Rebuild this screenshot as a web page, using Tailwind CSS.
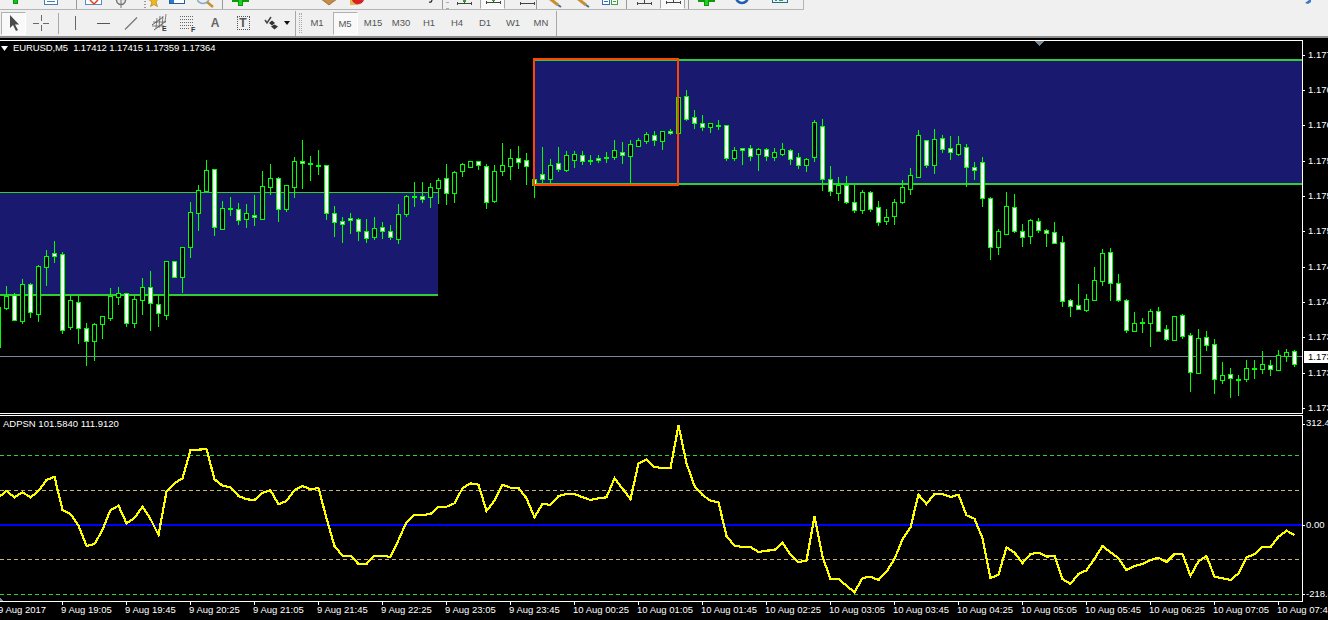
<!DOCTYPE html>
<html lang="en">
<head>
  <meta charset="UTF-8">
  <title>EURUSD,M5</title>
  <script src="https://cdn.jsdelivr.net/npm/@tailwindcss/browser@4"></script>
</head>
<body class="bg-black font-['Liberation_Sans',sans-serif] overflow-hidden">
<div class="w-[1328px] h-[620px] flex flex-col overflow-hidden">

  <!-- Top toolbar, cut off by the window -->
  <div class="h-[10px] bg-[#f0f0f0] flex shrink-0 overflow-hidden">
    <div class="w-[804px] h-[10px] border-b border-r border-[#b4b4b4] flex items-end overflow-hidden">
      <svg class="ml-[7px] shrink-0" width="16" height="16" shape-rendering="crispEdges"><rect x="6" y="6" width="5" height="5" fill="#009a00"/><rect x="7" y="6" width="3" height="4" fill="#16c016"/></svg>
      <svg class="ml-[20px] shrink-0" width="16" height="16" shape-rendering="crispEdges"><rect x="1.500" y="4.500" width="13" height="7" fill="#fff" stroke="#4a7db5"/><path d="M4 8.500h8" stroke="#4a7db5"/></svg>
      <div class="ml-[17px] w-px h-[9px] bg-[#9a9a9a] shrink-0"></div>
      <svg class="ml-[8px] shrink-0" width="18" height="16"><rect x="0.500" y="3.500" width="16" height="8" fill="#fff" stroke="#5a8ac0"/><path d="M5 7l4 4 4-4" fill="none" stroke="#e04020" stroke-width="1.500"/></svg>
      <svg class="ml-[11px] shrink-0" width="14" height="16"><circle cx="7" cy="7" r="4.500" fill="#e8e8e8" stroke="#777" stroke-width="1.500"/><path d="M7 7v8" stroke="#777"/></svg>
      <svg class="ml-[16px] shrink-0" width="14" height="16"><path d="M4 6h10l-2 3 1.500 4.500-3.500-2-3.500 2L8 9z" fill="#f0b820" stroke="#b08010" stroke-width="0.700"/><path d="M1 8v1M1 11v1M1 14v1" stroke="#444"/></svg>
      <svg class="ml-[11px] shrink-0" width="16" height="16" shape-rendering="crispEdges"><rect x="0.500" y="2.500" width="15" height="8" fill="#fff" stroke="#1f5fa8"/><rect x="1" y="3" width="4" height="7" fill="#2f78c8"/></svg>
      <svg class="ml-[12px] shrink-0" width="18" height="16"><circle cx="6" cy="4" r="6.500" fill="#e0f0fa" stroke="#90a8b8" stroke-width="1.500"/><path d="M10 9l6 5" stroke="#c89030" stroke-width="2.500"/></svg>
      <div class="ml-[7px] w-px h-[9px] bg-[#9a9a9a] shrink-0"></div>
      <svg class="ml-[9px] shrink-0" width="18" height="16" shape-rendering="crispEdges"><rect x="0" y="6" width="17" height="3" fill="#0a9a0a"/><rect x="6" y="6" width="5" height="7" fill="#0a9a0a"/><rect x="7" y="6" width="3" height="6" fill="#20d020"/></svg>
      <svg class="ml-[70px] shrink-0" width="18" height="16"><path d="M1 6h16l-8 6z" fill="#c48c44" stroke="#8a5c20" stroke-width="0.700"/></svg>
      <svg class="ml-[11px] shrink-0" width="16" height="16"><path d="M1 6h8v6H1z" fill="#e8b850"/><circle cx="9" cy="5" r="6" fill="#e02020" stroke="#a01010" stroke-width="0.500"/><rect x="6" y="5" width="6" height="2" fill="#fff"/></svg>
      <svg class="ml-[64px] shrink-0" width="5" height="16"><path d="M0 9q3 1 3-3" fill="none" stroke="#223" stroke-width="1.200"/></svg>
      <div class="ml-[8px] w-px h-[9px] bg-[#9a9a9a] shrink-0"></div>
      <div class="ml-[3px] w-[3px] h-[7px] border-y border-[#aaa] shrink-0"></div>
      <svg class="ml-[7px] shrink-0" width="16" height="16" shape-rendering="crispEdges"><path d="M1 10.500h14M8 5v5" stroke="#444"/><path d="M1 9v3M15 9v3" stroke="#444"/><rect x="7" y="6" width="3" height="3" fill="#30a030"/></svg>
      <div class="ml-[8px] w-[25px] h-[9px] flex justify-center items-end bg-[#f9f9f9] border-x border-b border-x-[#a8a8a8] border-b-white shrink-0">
        <svg class="shrink-0" width="16" height="16" shape-rendering="crispEdges"><path d="M1 10.500h14M8 5v5" stroke="#444"/><path d="M1 9v3M15 9v3" stroke="#444"/><rect x="7" y="6" width="3" height="3" fill="#30a030"/></svg>
      </div>
      <svg class="ml-[14px] shrink-0" width="16" height="16" shape-rendering="crispEdges"><path d="M1 10.500h14" stroke="#444"/><path d="M1 9v3M15 9v3" stroke="#444"/></svg>
      <div class="ml-px w-px h-[9px] bg-[#9a9a9a] shrink-0"></div>
      <svg class="ml-[10px] shrink-0" width="16" height="16"><path d="M2 5l9 7" stroke="#c89030" stroke-width="3"/><path d="M11 12l3 2" stroke="#4070a0" stroke-width="2"/></svg>
      <svg class="ml-[12px] shrink-0" width="16" height="16"><path d="M2 5l9 7" stroke="#c89030" stroke-width="3"/><path d="M11 12l3 2" stroke="#4070a0" stroke-width="2"/></svg>
      <svg class="ml-[10px] shrink-0" width="18" height="16" shape-rendering="crispEdges"><rect x="1.500" y="5.500" width="7" height="6" fill="#fff" stroke="#2f6fc0"/><rect x="10.500" y="5.500" width="6" height="6" fill="#fff" stroke="#40a040"/><path d="M3 8.500h4" stroke="#2f6fc0"/><path d="M12 8.500h3" stroke="#40a040"/></svg>
      <div class="ml-[7px] w-px h-[9px] bg-[#9a9a9a] shrink-0"></div>
      <svg class="ml-[9px] shrink-0" width="16" height="16" shape-rendering="crispEdges"><path d="M1 10.500h14M8 5v5" stroke="#444"/><path d="M1 9v3M15 9v3" stroke="#444"/></svg>
      <div class="ml-[8px] w-[25px] h-[9px] flex justify-center items-end bg-[#f9f9f9] border-x border-b border-x-[#a8a8a8] border-b-white shrink-0">
        <svg class="shrink-0" width="16" height="16" shape-rendering="crispEdges"><path d="M1 10.500h14M8 5v5" stroke="#444"/><path d="M1 9v3M15 9v3" stroke="#444"/></svg>
      </div>
      <div class="ml-[3px] w-px h-[9px] bg-[#9a9a9a] shrink-0"></div>
      <svg class="ml-[9px] shrink-0" width="18" height="16" shape-rendering="crispEdges"><rect x="0" y="6" width="17" height="3" fill="#0a9a0a"/><rect x="6" y="6" width="5" height="7" fill="#0a9a0a"/><rect x="7" y="6" width="3" height="6" fill="#20d020"/></svg>
      <svg class="ml-[19px] shrink-0" width="16" height="16"><circle cx="7" cy="4" r="6" fill="#fff" stroke="#1e5fb0" stroke-width="2.500"/></svg>
      <svg class="ml-[21px] shrink-0" width="16" height="16" shape-rendering="crispEdges"><rect x="0.500" y="2.500" width="15" height="7" fill="#e8f4f4" stroke="#2a6a8a"/><path d="M3 8l3-2 3 2 3-2" fill="none" stroke="#30a060"/></svg>
    </div>
    <svg class="ml-[501px] shrink-0" width="6" height="4"><path d="M0 3l4-3h2v2l-3 2z" fill="#3f78c8"/></svg>
  </div>

  <!-- Line studies and periodicity toolbar -->
  <div class="h-[26px] bg-[#f0f0f0] flex items-center shrink-0 pl-px text-[#555] text-[9.5px]">
    <div class="w-[25px] h-[23px] flex items-center justify-center bg-[#f9f9f9] border border-t-[#b0b0b0] border-l-[#b0b0b0] border-b-white border-r-white shrink-0">
      <svg width="10" height="16"><path d="M1 0v13l3-3 3 6 2-1-3-5.500h4z" fill="#4a4a4a"/></svg>
    </div>
    <div class="ml-px w-7 flex justify-center shrink-0">
      <svg width="16" height="16" shape-rendering="crispEdges"><path d="M8 0v6M8 10v6M0 8h6M10 8h6" stroke="#6a6a6a" fill="none"/></svg>
    </div>
    <div class="ml-[3px] w-px h-[21px] bg-[#a8a8a8] shrink-0"></div>
    <div class="ml-[2px] w-7 flex justify-center shrink-0">
      <svg width="3" height="14" shape-rendering="crispEdges"><path d="M1.500 0v14" stroke="#666"/></svg>
    </div>
    <div class="w-7 flex justify-center shrink-0">
      <svg width="13" height="3" shape-rendering="crispEdges"><path d="M0 1.500h13" stroke="#555"/></svg>
    </div>
    <div class="w-7 flex justify-center shrink-0">
      <svg width="14" height="13"><path d="M1 12.500L13 0.500" stroke="#777" stroke-width="1.200"/></svg>
    </div>
    <div class="w-7 flex justify-center shrink-0 relative">
      <svg width="17" height="18"><path d="M1 11L12 3M3 16L15 7" stroke="#555"/><path d="M6 4l-1 10M9 2l-1 12M12 2l-1 10M15 0l-1 8M2 8h13M1 12h12" stroke="#666" stroke-width="0.800"/></svg>
      <span class="absolute left-[17px] top-[11px] text-[7px] leading-[7px] font-bold text-[#333]">E</span>
    </div>
    <div class="w-7 flex justify-center shrink-0 relative">
      <svg width="14" height="14" shape-rendering="crispEdges"><path d="M0 0.500h14M0 3.500h14M0 6.500h14M0 9.500h14M0 12.500h10" stroke="#666" stroke-dasharray="1 1"/></svg>
      <span class="absolute left-[18px] top-[10px] text-[7px] leading-[7px] font-bold text-[#333]">F</span>
    </div>
    <div class="w-7 text-center text-[12px] leading-[14px] font-bold text-[#666] shrink-0">A</div>
    <div class="w-7 flex justify-center shrink-0">
      <div class="w-[13px] h-[14px] border border-dotted border-[#555] flex items-center justify-center text-[12px] leading-[12px] font-bold text-[#555]">T</div>
    </div>
    <div class="w-7 flex justify-center shrink-0">
      <svg width="15" height="14"><path d="M1 4l2 3 4-6" fill="none" stroke="#444" stroke-width="1.500"/><path d="M5 7l3-2.500 3 2.500-3 2.500z" fill="#333"/><path d="M7 10.500l3.500-2 3.500 2-3.500 3z" fill="#333"/></svg>
    </div>
    <svg class="-ml-[1px] shrink-0" width="6" height="4"><path d="M0 0h6L3 4z" fill="#111"/></svg>
    <div class="ml-[5px] w-px h-[25px] bg-[#a8a8a8] shrink-0"></div>
    <div class="ml-[3px] w-[3px] h-[20px] border-x border-dotted border-[#aaa] shrink-0"></div>
    <div class="ml-px w-7 text-center shrink-0">M1</div>
    <div class="w-7 flex justify-center shrink-0">
      <div class="w-[25px] h-[23px] leading-[21px] text-center bg-[#f9f9f9] border border-t-[#b0b0b0] border-l-[#b0b0b0] border-b-white border-r-white">M5</div>
    </div>
    <div class="w-7 text-center shrink-0">M15</div>
    <div class="w-7 text-center shrink-0">M30</div>
    <div class="w-7 text-center shrink-0">H1</div>
    <div class="w-7 text-center shrink-0">H4</div>
    <div class="w-7 text-center shrink-0">D1</div>
    <div class="w-7 text-center shrink-0">W1</div>
    <div class="w-7 text-center shrink-0">MN</div>
    <div class="ml-px w-px h-[25px] bg-[#a8a8a8] shrink-0"></div>
  </div>

  <!-- Toolbar bottom edge -->
  <div class="h-[2px] bg-[#8e8e8e] shrink-0"></div>

  <!-- Chart -->
  <div class="relative w-[1328px] h-[582px] bg-black shrink-0 overflow-hidden text-white text-[9.5px] leading-[12px] whitespace-nowrap">
    <svg id="chart" class="absolute left-0 top-0" width="1328" height="582" viewBox="0 38 1328 582" shape-rendering="crispEdges"></svg>

    <!-- Main pane header -->
    <svg class="absolute left-[1px] top-[8px]" width="7" height="5"><path d="M0 0h7L3.500 5z" fill="#fff"/></svg>
    <span class="absolute left-[13px] top-[4px] tracking-[-0.1px]">EURUSD,M5&nbsp; 1.17412 1.17415 1.17359 1.17364</span>

    <!-- Price axis -->
    <span class="absolute left-[1308px] top-[11px]">1.17740</span>
    <span class="absolute left-[1308px] top-[46px]">1.17690</span>
    <span class="absolute left-[1308px] top-[81px]">1.17655</span>
    <span class="absolute left-[1308px] top-[117px]">1.17590</span>
    <span class="absolute left-[1308px] top-[152px]">1.17555</span>
    <span class="absolute left-[1308px] top-[187px]">1.17520</span>
    <span class="absolute left-[1308px] top-[223px]">1.17485</span>
    <span class="absolute left-[1308px] top-[258px]">1.17450</span>
    <span class="absolute left-[1308px] top-[293px]">1.17380</span>
    <span class="absolute left-[1304px] top-[313px] w-[24px] h-[12px] bg-white text-black pl-[4px]">1.17364</span>
    <span class="absolute left-[1308px] top-[329px]">1.17345</span>
    <span class="absolute left-[1308px] top-[364px]">1.17310</span>

    <!-- Indicator pane -->
    <span class="absolute left-[3px] top-[380px]">ADPSN 101.5840 111.9120</span>
    <span class="absolute left-[1306px] top-[379px]">312.43</span>
    <span class="absolute left-[1306px] top-[481px]">0.00</span>
    <span class="absolute left-[1306px] top-[550px]">-218.41</span>

    <!-- Time axis -->
    <span class="absolute left-[-2px] top-[566px]">9 Aug 2017</span>
    <span class="absolute left-[61px] top-[566px]">9 Aug 19:05</span>
    <span class="absolute left-[125px] top-[566px]">9 Aug 19:45</span>
    <span class="absolute left-[189px] top-[566px]">9 Aug 20:25</span>
    <span class="absolute left-[253px] top-[566px]">9 Aug 21:05</span>
    <span class="absolute left-[317px] top-[566px]">9 Aug 21:45</span>
    <span class="absolute left-[381px] top-[566px]">9 Aug 22:25</span>
    <span class="absolute left-[445px] top-[566px]">9 Aug 23:05</span>
    <span class="absolute left-[509px] top-[566px]">9 Aug 23:45</span>
    <span class="absolute left-[573px] top-[566px]">10 Aug 00:25</span>
    <span class="absolute left-[637px] top-[566px]">10 Aug 01:05</span>
    <span class="absolute left-[701px] top-[566px]">10 Aug 01:45</span>
    <span class="absolute left-[765px] top-[566px]">10 Aug 02:25</span>
    <span class="absolute left-[829px] top-[566px]">10 Aug 03:05</span>
    <span class="absolute left-[893px] top-[566px]">10 Aug 03:45</span>
    <span class="absolute left-[957px] top-[566px]">10 Aug 04:25</span>
    <span class="absolute left-[1021px] top-[566px]">10 Aug 05:05</span>
    <span class="absolute left-[1085px] top-[566px]">10 Aug 05:45</span>
    <span class="absolute left-[1149px] top-[566px]">10 Aug 06:25</span>
    <span class="absolute left-[1213px] top-[566px]">10 Aug 07:05</span>
    <span class="absolute left-[1277px] top-[566px]">10 Aug 07:45</span>
  </div>
</div>

<script>
  // candles read off the chart: wick top, body top, body bottom, wick bottom, 1 = white body
  // each block has its own y origin, values are 3x
  const blocks = [
    { y0: 140, rows: [
      [500,500,620,620,0],
      [438,468,503,507,0],[460,466,539,539,1],[417,433,542,549,0],[430,433,515,531,1],[375,379,521,543,0],
      [330,349,380,435,0],[303,340,347,366,1],[336,343,569,579,1],[465,481,560,567,0],[465,487,563,609,1],
      [549,565,602,675,1],[549,553,602,660,0],[529,529,551,594,0],[444,468,533,540,0],[441,460,470,492,0],
      [460,460,548,558,1],[467,478,548,561,0],[414,442,479,522,0],[393,442,488,570,1],[465,493,518,558,1],
      [364,364,524,537,0],[364,364,410,410,1],[322,322,410,456,0],[186,217,320,351,0],[136,149,218,270,0],
      [60,91,152,152,0],[88,88,260,285,1],[183,205,266,266,0],[171,205,206,225,0],[189,208,239,252,1],
      [192,220,236,261,0],[165,226,232,255,1],[93,139,236,236,0],[72,115,140,162,0],[111,115,208,243,1],
      [136,136,206,213,0],[51,64,140,171,0],[0,64,68,144,1],[48,70,71,120,0],[30,76,77,102,0],[76,76,220,237,1]
    ]},
    { y0: 50, rows: [
      [468,490,515,558,1],[501,514,521,576,1],[489,505,509,549,1],[504,508,542,570,1],[507,544,563,576,1],
      [501,535,560,567,0],[516,532,542,564,1],[525,544,560,567,1],[462,493,566,579,0],[435,439,491,498,0],
      [396,439,442,468,1],[396,439,446,456,1],[400,412,440,471,0],[384,391,413,459,0],[342,385,428,462,1],
      [363,367,428,456,0],[340,343,362,378,0],[334,334,350,350,0],[334,334,344,357,1],[342,349,455,474,1],
      [345,364,452,456,0],[279,346,362,375,0],[297,325,347,387,0],[288,325,335,354,1],[309,331,347,402,1],
      [387,387,405,441,1],[291,373,386,396,1],[327,346,386,402,0],[291,340,356,363,1],[304,316,359,363,0],
      [304,313,329,351,0],[304,316,332,342,1],[315,331,334,342,1],[316,325,331,336,1],[305,320,323,336,1],
      [270,301,320,327,0],[276,307,314,339,1],[270,283,317,396,0],[264,271,287,287,0],[246,253,272,279,0],
      [243,256,271,285,1],[243,244,272,297,0],[237,243,248,252,1],[141,142,248,248,0],[120,139,206,210,1],
      [180,202,218,234,1],[195,220,230,240,1],[220,220,230,246,0],[210,226,229,237,1],[226,226,323,330,1],
      [291,301,323,330,0],[295,295,301,342,1],[285,295,317,330,1],[295,298,311,360,0],[295,298,317,330,1],
      [295,307,320,330,0],[279,298,311,315,0],[297,301,326,342,1],[309,322,344,354,1],[324,328,344,363,0],
      [210,217,320,333,0],[207,229,386,420,1],[348,388,422,435,1],[381,406,428,450,0],[378,406,455,459,1],
      [405,457,479,486,1],[420,427,479,489,0],[423,427,476,483,1],[453,472,515,525,1],[477,500,512,522,0],
      [447,457,497,522,0],[390,412,455,459,0],[354,376,416,432,0],[240,256,380,380,0],[271,271,344,351,1],
      [237,268,344,369,0],[255,265,296,306,1],[258,295,305,327,1],[258,283,311,315,0],[282,292,352,408,1],
      [336,352,361,387,1]
    ]},
    { y0: 170, rows: [
      [-40,-23,85,107,1],[82,85,230,267,1],[178,184,230,252,0],[66,109,191,191,0],[72,112,182,185,1],
      [162,184,200,228,1],[148,151,197,219,0],[144,154,179,185,1],[178,181,188,228,1],[156,187,218,218,1],
      [198,217,392,408,1],[387,391,407,438,1],[342,404,416,416,1],[372,388,419,423,0],[291,331,389,389,0],
      [237,250,332,345,0],[234,247,338,390,1],[312,340,389,393,1],[387,391,479,486,1],[426,460,482,482,0],
      [444,456,458,486,0],[418,424,458,528,0],[411,424,482,482,1],[465,478,506,509,1],[438,438,509,509,0],
      [433,436,497,504,1],[490,496,605,663,1],[477,505,608,608,0],[483,502,524,540,1],[507,523,628,669,1],
      [576,616,629,639,0],[595,613,625,681,1],[615,628,629,675,0],[570,595,626,633,0],[570,595,598,624,1],
      [543,583,596,609,0],[570,586,596,615,1],[540,556,599,599,0],[537,547,559,573,0],[540,544,581,588,1]
    ]}
  ];

  // ADPSN values, 3x above y=410, one per bar
  const adpsn = [262,243,262,247,262,243,210,200,300,312,347,408,402,360,300,287,340,324,290,327,375,245,220,205,120,119,117,208,227,232,258,268,270,248,241,283,273,241,228,238,234,325,408,437,437,462,462,437,437,441,390,336,315,315,312,290,
    290,280,235,220,224,303,272,224,233,233,265,322,281,285,258,252,252,262,270,265,262,205,236,267,160,149,171,174,174,46,160,228,255,272,277,378,407,411,411,426,422,420,398,435,456,452,320,440,507,507,527,547,504,500,510,
    485,447,388,352,254,282,252,252,261,254,316,326,385,504,494,412,428,459,432,428,440,437,507,522,492,481,446,408,427,445,480,468,462,450,443,456,432,432,497,454,438,500,505,510,490,442,433,410,412,380,362,375];

  const GREEN = '#00ff00', LIME = '#32cd32', BLUE = '#191970', RED = '#ff4500', SLATE = '#778899', TAN = '#c8b46e';
  let out = '';
  const rect = (x, y, w, h, fill) => { out += `<rect x="${x}" y="${y}" width="${w}" height="${h}" fill="${fill}"/>`; };

  // objects behind the bars
  rect(0, 192, 438, 103, BLUE);
  rect(0, 192, 438, 1, LIME);
  rect(0, 294, 438, 2, LIME);
  rect(534, 60, 768, 125, BLUE);
  rect(534, 59, 768, 2, LIME);
  rect(534, 183, 768, 2, LIME);

  // bid line
  rect(0, 356, 1302, 1, SLATE);

  // bars
  let i = 0;
  blocks.forEach(b => {
    b.rows.forEach(c => {
      const [wt, bt, bb, wb] = c.slice(0, 4).map(v => Math.round(b.y0 + v / 3));
      const left = 8 * i - 4;
      rect(left + 2, wt, 1, wb - wt + 1, GREEN);
      rect(left, bt, 5, bb - bt + 1, GREEN);
      if (bb - bt >= 2) rect(left + 1, bt + 1, 3, bb - bt - 1, c[4] ? '#ffffff' : '#000000');
      i++;
    });
  });

  // selected rectangle stays on top of the bars
  rect(533, 58, 146, 2, RED);
  rect(533, 184, 146, 2, RED);
  rect(533, 58, 2, 128, RED);
  rect(677, 58, 2, 128, RED);

  // frame
  rect(0, 40, 1303, 1, '#ffffff');
  rect(1302, 40, 1, 374, '#ffffff');
  rect(0, 413, 1303, 1, '#ffffff');
  rect(0, 415, 1303, 1, '#ffffff');
  rect(1302, 415, 1, 187, '#ffffff');
  rect(0, 601, 1303, 1, '#ffffff');
  [55, 90, 125, 161, 196, 231, 267, 302, 337, 373, 408, 424, 525, 594].forEach(y => rect(1303, y, 2, 1, '#ffffff'));
  for (let x = 62; x < 1300; x += 64) rect(x, 602, 1, 3, '#ffffff');
  out += `<path d="M1035 41h9l-4.500 5z" fill="${SLATE}"/>`;
  out += `<path d="M0 598l3 3H0z" fill="${SLATE}"/>`;

  // indicator levels
  [[455, LIME], [490, TAN], [559, TAN], [594, LIME]].forEach(([y, col]) => {
    out += `<path d="M0 ${y + 0.5}H1302" stroke="${col}" stroke-dasharray="4 3"/>`;
  });
  rect(0, 524, 1302, 2, '#0000ff');

  // indicator line
  const pts = adpsn.map((v, n) => `${8 * n - 1.5},${(410 + v / 3).toFixed(1)}`).join(' ');
  out += `<polyline points="${pts}" fill="none" stroke="#ffff00" stroke-width="2.2"/>`;

  document.getElementById('chart').innerHTML = out;
</script>
</body>
</html>
